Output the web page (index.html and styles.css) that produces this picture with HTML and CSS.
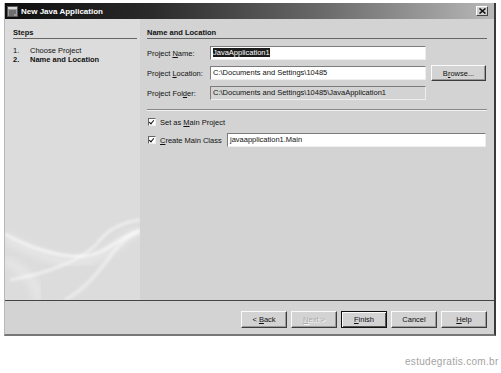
FILE: index.html
```html
<!DOCTYPE html>
<html lang="en">
<head>
    <meta charset="UTF-8">
    <title>New Java Application</title>
    <link rel="stylesheet" href="styles.css">
</head>
<body>
    <div class="window">
        <!-- Barra de título -->
        <div class="titlebar">
            <svg class="app-icon" width="11" height="11" viewBox="0 0 11 11">
                <rect x="0.5" y="0.5" width="10" height="10" fill="#9a9a9a" stroke="#555"/>
                <rect x="1" y="1" width="9" height="2" fill="#d8d8d8"/>
                <line x1="2" y1="5" x2="9" y2="5" stroke="#444"/>
                <line x1="2" y1="7" x2="9" y2="7" stroke="#444"/>
                <line x1="2" y1="9" x2="7" y2="9" stroke="#444"/>
            </svg>
            <span class="title">New Java Application</span>
            <span class="close-btn">
                <svg width="7" height="6" viewBox="0 0 7 6">
                    <path d="M0.5 0.5 L6.5 5.5 M6.5 0.5 L0.5 5.5" stroke="#111" stroke-width="1.6"/>
                </svg>
            </span>
        </div>

        <div class="content">
            <!-- Painel de passos -->
            <div class="steps-pane">
                <h2>Steps</h2>
                <ol class="steps">
                    <li><span class="num">1.</span>Choose Project</li>
                    <li class="current"><span class="num">2.</span>Name and Location</li>
                </ol>
                <svg class="swirl" width="135" height="100" viewBox="0 0 135 100">
                    <defs>
                        <filter id="blur"><feGaussianBlur stdDeviation="1.6"/></filter>
                        <filter id="blur2"><feGaussianBlur stdDeviation="4"/></filter>
                    </defs>
                    <path d="M0 38 C30 52 60 70 90 58 C110 50 120 35 135 30" stroke="#fff" stroke-width="6" fill="none" opacity="0.45" filter="url(#blur2)"/>
                    <path d="M0 34 C25 48 55 58 80 56 C100 54 110 40 135 30" stroke="#fff" stroke-width="2" fill="none" opacity="0.9" filter="url(#blur)"/>
                    <path d="M5 80 C40 74 80 60 95 40 C105 28 120 22 135 20" stroke="#fff" stroke-width="2" fill="none" opacity="0.75" filter="url(#blur)"/>
                    <path d="M60 100 C80 90 95 70 110 50 C118 40 127 34 135 32" stroke="#fff" stroke-width="3" fill="none" opacity="0.5" filter="url(#blur)"/>
                    <path d="M0 60 C20 70 40 90 30 100" stroke="#fff" stroke-width="8" fill="none" opacity="0.35" filter="url(#blur2)"/>
                </svg>
            </div>

            <!-- Painel principal -->
            <div class="main-pane">
                <h2>Name and Location</h2>
                <div class="form-grid">
                    <label>Project <u>N</u>ame:</label>
                    <div class="field"><span class="selected">JavaApplication1</span></div>
                    <span></span>

                    <label>Project <u>L</u>ocation:</label>
                    <div class="field">C:\Documents and Settings\10485</div>
                    <button class="btn browse">B<u>r</u>owse...</button>

                    <label>Project Fol<u>d</u>er:</label>
                    <div class="field readonly">C:\Documents and Settings\10485\JavaApplication1</div>
                    <span></span>
                </div>
                <div class="separator"></div>
                <div class="check-row">
                    <span class="checkbox"></span>
                    <span>Set as <u>M</u>ain Project</span>
                </div>
                <div class="check-row">
                    <span class="checkbox"></span>
                    <span class="check-label"><u>C</u>reate Main Class</span>
                    <div class="field main-class">javaapplication1.Main</div>
                </div>
            </div>
        </div>

        <!-- Botões -->
        <div class="footer">
            <button class="btn">&lt; <u>B</u>ack</button>
            <button class="btn disabled"><u>N</u>ext &gt;</button>
            <button class="btn default"><u>F</u>inish</button>
            <button class="btn">Cancel</button>
            <button class="btn"><u>H</u>elp</button>
        </div>
    </div>

    <div class="watermark">estudegratis.com.br</div>
</body>
</html>
```

FILE: styles.css
```css
body {
    margin: 0;
    width: 501px;
    height: 373px;
    background: #fff;
    font-family: "Liberation Sans", Arial, sans-serif;
    font-size: 7.5px;
    color: #111;
    overflow: hidden;
}
u {
    text-decoration: underline;
}
.window {
    margin: 3px 0 0 4px;
    width: 489px;
    height: 331px;
    background: #d3d3d3;
    border-left: 1px solid #b8b8b8;
    border-right: 2px solid #3a3a3a;
    border-bottom: 2px solid #777;
    display: flex;
    flex-direction: column;
}
.titlebar {
    height: 16px;
    background: linear-gradient(to right, #0e0e0e 0%, #2a2a2a 30%, #6a6a6a 65%, #b8b8b8 100%);
    display: flex;
    align-items: center;
    padding: 0 6px 0 2px;
    color: #fff;
}
.app-icon {
    margin-right: 3px;
}
.title {
    font-weight: bold;
    font-size: 8px;
    flex: 1;
}
.close-btn {
    width: 12px;
    height: 10px;
    background: #d0d0d0;
    border: 1px solid;
    border-color: #fff #444 #444 #fff;
    display: flex;
    align-items: center;
    justify-content: center;
    box-sizing: border-box;
}
.content {
    display: flex;
    height: 281px;
}
.steps-pane {
    flex-shrink: 0;
    width: 135px;
    background: #dcdcdc;
    padding: 8px 0 0 8px;
    box-sizing: border-box;
    position: relative;
}
h2 {
    margin: 0;
    font-size: 7.5px;
    font-weight: bold;
    line-height: 11px;
    border-bottom: 1px solid #666;
}
.steps-pane h2 {
    margin-right: 3px;
}
.steps {
    list-style: none;
    margin: 7px 0 0;
    padding: 0;
}
.steps li {
    line-height: 9px;
}
.steps .num {
    display: inline-block;
    width: 17px;
}
.steps .current {
    font-weight: bold;
}
.swirl {
    position: absolute;
    left: 0;
    bottom: 0;
}
.main-pane {
    flex: 1;
    min-width: 0;
    padding: 8px 7px 0 7px;
}
.form-grid {
    margin-top: 7px;
    display: grid;
    grid-template-columns: 58px 216px 55px;
    column-gap: 5px;
    grid-auto-rows: 14px;
    row-gap: 6px;
    align-items: center;
}
.field {
    height: 14px;
    box-sizing: border-box;
    background: #fff;
    border: 1px solid;
    border-color: #7c7c7c #eee #eee #7c7c7c;
    padding: 0 2px;
    line-height: 12px;
    white-space: nowrap;
    overflow: hidden;
}
.field.readonly {
    background: #d3d3d3;
}
.selected {
    background: #1c1c1c;
    color: #fff;
}
.btn {
    font-family: "Liberation Sans", Arial, sans-serif;
    font-size: 7.5px;
    color: #111;
    background: #d3d3d3;
    border: 1px solid;
    border-color: #fafafa #3c3c3c #3c3c3c #fafafa;
    box-shadow: inset -1px -1px 0 #999;
    padding: 0;
    height: 17px;
}
.browse {
    height: 16px;
}
.separator {
    margin-top: 9px;
    border-top: 1px solid #8a8a8a;
    border-bottom: 1px solid #f0f0f0;
}
.check-row {
    display: flex;
    align-items: center;
    height: 12px;
    margin-top: 5px;
    padding-left: 1px;
}
.check-row + .check-row {
    height: 14px;
    margin-top: 5px;
}
.checkbox {
    width: 8px;
    height: 8px;
    box-sizing: border-box;
    background: #fff;
    border: 1px solid;
    border-color: #666 #eee #eee #666;
    margin-right: 4px;
    position: relative;
}
.checkbox::after {
    content: "";
    position: absolute;
    left: 1px;
    top: 0;
    width: 2px;
    height: 4px;
    border: solid #111;
    border-width: 0 1.3px 1.3px 0;
    transform: rotate(40deg);
}
.check-label {
    width: 67px;
}
.main-class {
    flex: 1;
    margin-right: 1px;
}
.footer {
    flex: 1;
    border-top: 1px solid #444;
    display: flex;
    justify-content: flex-end;
    align-items: flex-start;
    gap: 4px;
    padding: 10px 7px 0 0;
}
.footer .btn {
    width: 46px;
}
.btn.disabled {
    color: #aaa;
    text-shadow: 1px 1px 0 #f4f4f4;
}
.btn.default {
    border-color: #111;
    box-shadow: inset 1px 1px 0 #fafafa, inset -1px -1px 0 #555;
}
.watermark {
    margin: 20px 0 0 405px;
    font-size: 10px;
    color: #a4a4a4;
    letter-spacing: 0.3px;
}
```
